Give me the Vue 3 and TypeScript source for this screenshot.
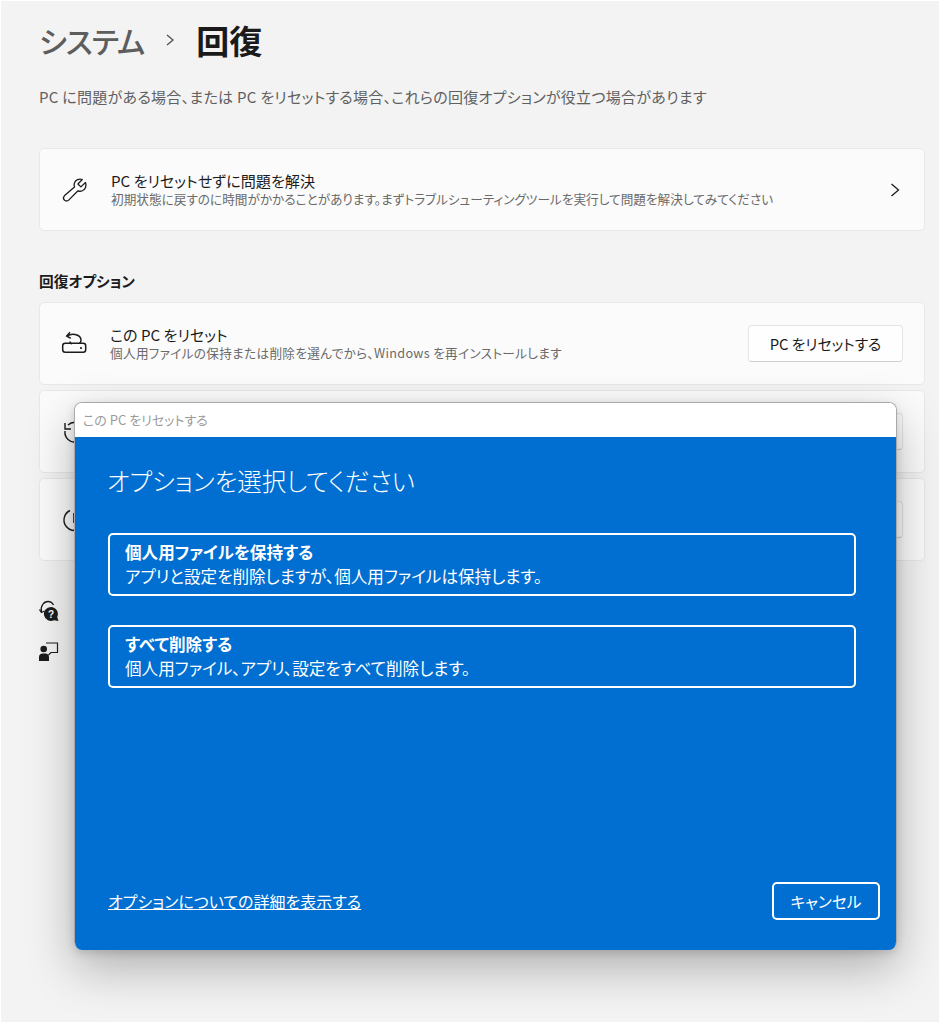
<template>
  <div class="page">
    <div class="breadcrumb">
      <span class="crumb-parent">システム</span>
      <svg class="crumb-sep" width="12" height="14" viewBox="0 0 12 14"><path d="M3 2l6 5-6 5" fill="none" stroke="#555" stroke-width="1.4" /></svg>
      <span class="crumb-current">回復</span>
    </div>
    <p class="intro">PC に問題がある場合、または PC をリセットする場合、これらの回復オプションが役立つ場合があります</p>

    <div class="card first">
      <svg class="card-icon" width="28" height="28" viewBox="0 0 28 28">
        <path d="M24.500 6.500l-4.600 4.400-3-2.900 4.400-4.500c-3.200-1.200-6.900.4-7.900 3.500-.5 1.400-.3 2.800.1 3.900L3.600 19.600c-1.400 1.400-1.400 3.300-.2 4.500 1.200 1.200 3.100 1.200 4.500-.2l9.100-9.100c1.200.5 2.600.6 3.900.2 3.300-1.100 5-4.900 3.600-8.500z" fill="none" stroke="#1c1c1c" stroke-width="1.3" stroke-linejoin="round" />
      </svg>
      <div class="card-text">
        <div class="card-title">PC をリセットせずに問題を解決</div>
        <div class="card-sub">初期状態に戻すのに時間がかかることがあります。まずトラブルシューティングツールを実行して問題を解決してみてください</div>
      </div>
      <svg class="chevron" width="12" height="16" viewBox="0 0 12 16"><path d="M2.500 2l7 6-7 6" fill="none" stroke="#1c1c1c" stroke-width="1.3" /></svg>
    </div>

    <h2 class="section">回復オプション</h2>

    <div class="stack">
      <div class="card">
        <svg class="card-icon narrow" width="26" height="26" viewBox="0 0 26 26">
          <rect x="1.700" y="12.300" width="23" height="9" rx="2.500" fill="none" stroke="#1c1c1c" stroke-width="1.500" />
          <path d="M6 5.200C8 3.800 11 3 14 3.500c3.500.6 6 3 6 5.800 0 1.300-.5 2.300-1.500 3.200M9 10.500c0 1 .6 2 1.700 2.700" fill="none" stroke="#1c1c1c" stroke-width="1.500" />
          <path d="M9 1.300L5.700 5l4 2.300" fill="none" stroke="#1c1c1c" stroke-width="1.500" />
          <circle cx="20" cy="17" r="1.100" fill="#1c1c1c" />
        </svg>
        <div class="card-text">
          <div class="card-title">この PC をリセット</div>
          <div class="card-sub wide">個人用ファイルの保持または削除を選んでから、Windows を再インストールします</div>
        </div>
        <button class="card-btn">PC をリセットする</button>
      </div>

      <div class="card dim">
        <svg class="card-icon narrow" width="26" height="26" viewBox="0 0 26 26">
          <path d="M4 12a10 10 0 1 0 3-6M4 4v6h6" fill="none" stroke="#1c1c1c" stroke-width="1.400" />
        </svg>
        <div class="card-text"></div>
        <button class="card-btn ghost"></button>
      </div>

      <div class="card dim">
        <svg class="card-icon narrow" width="26" height="26" viewBox="0 0 26 26">
          <path d="M9 3.500a10.500 10.500 0 1 0 9 0" fill="none" stroke="#1c1c1c" stroke-width="1.400" />
          <path d="M13 6v10" stroke="#1c1c1c" stroke-width="1.600" />
        </svg>
        <div class="card-text"></div>
        <button class="card-btn ghost"></button>
      </div>
    </div>

    <div class="help-links">
      <svg width="22" height="22" viewBox="0 0 22 22">
        <path d="M2.500 12C1 6 5 1.500 9 1.500c2.500 0 4.500 1.500 5.500 3.500" fill="none" stroke="#1c1c1c" stroke-width="1.300" />
        <path d="M.5 9.500l2 3 3-1.500" fill="none" stroke="#1c1c1c" stroke-width="1.300" />
        <path d="M12 7a7 7 0 1 0 3 13.300l4.500.7-1.300-4A7 7 0 0 0 12 7z" fill="#1c1c1c" />
        <text x="12" y="17.500" text-anchor="middle" class="q-mark">?</text>
      </svg>
      <svg width="22" height="22" viewBox="0 0 22 22">
        <circle cx="4.700" cy="8" r="3.300" fill="#1c1c1c" />
        <path d="M0 20v-4c0-2 1.500-3.500 3.500-3.500h3c2 0 3.500 1.500 3.500 3.500v4z" fill="#1c1c1c" />
        <path d="M7 2h11.500v9.500H12L9.500 14" fill="none" stroke="#1c1c1c" stroke-width="1.200" />
      </svg>
    </div>

    <div class="dialog">
      <div class="dialog-bar">この PC をリセットする</div>
      <div class="dialog-body">
        <h1 class="dialog-title">オプションを選択してください</h1>
        <div class="option">
          <strong>個人用ファイルを保持する</strong>
          <span>アプリと設定を削除しますが、個人用ファイルは保持します。</span>
        </div>
        <div class="option">
          <strong>すべて削除する</strong>
          <span>個人用ファイル、アプリ、設定をすべて削除します。</span>
        </div>
        <div class="dialog-foot">
          <a class="more">オプションについての詳細を表示する</a>
          <button class="cancel">キャンセル</button>
        </div>
      </div>
    </div>
  </div>
</template>

<script setup lang="ts">
</script>

<style>
html, body {
  margin: 0;
  background: #fff;
}
</style>

<style scoped>
.page {
  position: relative;
  box-sizing: border-box;
  width: 938px;
  height: 1024px;
  margin-left: 1px;
  padding: 19px 14px 0 38px;
  border-top: 1px solid #fff;
  border-bottom: 2px solid #fff;
  background: #f3f3f3;
  font-family: "Noto Sans CJK JP", "Noto Sans", sans-serif;
  font-feature-settings: "palt";
  color: #1b1b1b;
}

.breadcrumb {
  display: flex;
  align-items: center;
  height: 40px;
  font-size: 33px;
  line-height: 40px;
  font-weight: 500;
}

.crumb-parent {
  color: #5d5d5d;
  font-size: 30px;
  letter-spacing: -1px;
}

.crumb-sep {
  margin: 0 20px;
}

.crumb-current {
  color: #1a1a1a;
  font-weight: 700;
}

.intro {
  margin: 27px 0 0;
  font-size: 15px;
  line-height: 20px;
  letter-spacing: 0.280px;
  color: #606060;
}

.card {
  display: flex;
  align-items: center;
  box-sizing: border-box;
  height: 83px;
  padding: 0 21px;
  background: #fbfbfb;
  border: 1px solid #e8e8e8;
  border-radius: 5px;
}

.card.first {
  margin-top: 41px;
}

.card-icon {
  flex: none;
  margin-right: 22px;
}

.card-icon.narrow {
  margin-right: 23px;
}

.card-text {
  flex: 1;
  min-width: 0;
}

.card-title {
  font-size: 15.100px;
  line-height: 19px;
  color: #1b1b1b;
}

.card-sub {
  font-size: 12.650px;
  line-height: 18px;
  color: #6a6a6a;
  white-space: nowrap;
}

.card-sub.wide {
  letter-spacing: 0.300px;
}

.chevron {
  flex: none;
  margin-right: 2px;
}

.section {
  margin: 39px 0 0;
  font-size: 14.700px;
  line-height: 22px;
  font-weight: 700;
  color: #1b1b1b;
}

.stack {
  display: flex;
  flex-direction: column;
  gap: 5px;
  margin-top: 10px;
}

.card-btn {
  flex: none;
  box-sizing: border-box;
  width: 155px;
  height: 37px;
  border: 1px solid #e5e5e5;
  border-bottom-color: #cfcfcf;
  border-radius: 4px;
  background: #fefefe;
  font-family: inherit;
  font-feature-settings: inherit;
  font-size: 14.800px;
  color: #1b1b1b;
}

.help-links {
  display: flex;
  flex-direction: column;
  gap: 19px;
  margin-top: 39px;
}

.q-mark {
  font-size: 10px;
  font-weight: 700;
  fill: #fff;
  font-family: "Liberation Sans", sans-serif;
}

.dialog {
  position: absolute;
  left: 73px;
  top: 401px;
  width: 823px;
  height: 548px;
  display: flex;
  flex-direction: column;
  border-radius: 8px;
  overflow: hidden;
  border: 1px solid #a9a9a9;
  border-bottom: 0;
  box-sizing: border-box;
  box-shadow: 0 18px 48px rgba(0, 0, 0, 0.28), 0 3px 10px rgba(0, 0, 0, 0.14);
}

.dialog-bar {
  flex: none;
  height: 34px;
  padding-left: 8px;
  background: #fff;
  font-size: 13px;
  line-height: 34px;
  color: #9b9b9b;
}

.dialog-body {
  flex: 1;
  display: flex;
  flex-direction: column;
  padding: 0 16px 30px 33px;
  background: #016fd1;
  color: #fff;
}

.dialog-title {
  margin: 26px 0 0 -1px;
  font-size: 24.500px;
  line-height: 36px;
  font-weight: 300;
}

.option {
  display: flex;
  flex-direction: column;
  box-sizing: border-box;
  width: 748px;
  height: 63px;
  margin-top: 29px;
  padding: 5px 15px;
  border: 2px solid #fff;
  border-radius: 5px;
}

.dialog-title + .option {
  margin-top: 34px;
}

.option strong {
  font-size: 16.600px;
  line-height: 24px;
  font-weight: 700;
}

.option span {
  font-size: 16.600px;
  line-height: 24px;
}

.dialog-foot {
  display: flex;
  align-items: center;
  justify-content: space-between;
  margin-top: auto;
}

.more {
  font-size: 16px;
  line-height: 24px;
  text-decoration: underline;
  color: #fff;
}

.cancel {
  box-sizing: border-box;
  width: 108px;
  height: 38px;
  border: 2px solid #fff;
  border-radius: 5px;
  background: transparent;
  font-family: inherit;
  font-feature-settings: inherit;
  font-size: 15.700px;
  color: #fff;
}
</style>
